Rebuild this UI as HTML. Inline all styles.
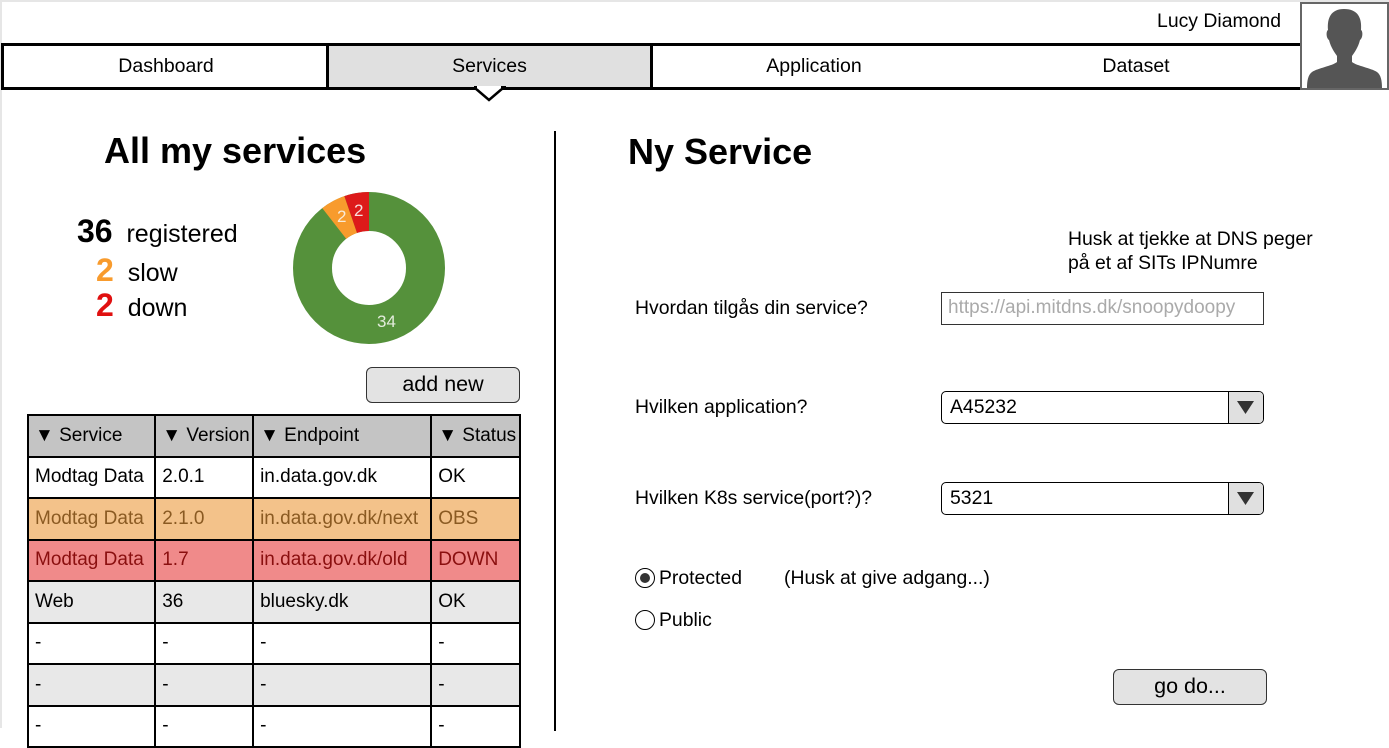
<!DOCTYPE html>
<html><head><meta charset="utf-8"><style>
*{box-sizing:border-box;margin:0;padding:0}
body{width:1389px;height:728px;overflow:hidden;background:#fff;font-family:"Liberation Sans",Arial,sans-serif;color:#000;position:relative}
.a{position:absolute}
.frame{left:0;top:0;width:1389px;height:728px;border-top:2px solid #e6e6e6;border-left:2px solid #e6e6e6}
.tab{top:43px;height:47px;border-top:3px solid #000;border-bottom:3px solid #000;font-size:19.5px;text-align:center;line-height:41px}
table{border-collapse:collapse;font-size:19px}
td{border:2px solid #000;height:41.5px;padding:0 0 0 6px;white-space:nowrap}
.btn{border:1.5px solid #333;border-radius:6px;background:#e3e3e3;text-align:center;font-size:21.5px}
.lbl{font-size:19.4px}
.sel{border:1.5px solid #000;border-radius:5px;height:33px;font-size:19.4px;line-height:30px;padding-left:8px}
.sel .arr{position:absolute;right:0;top:0;width:35px;height:100%;border-left:1.5px solid #000;background:#e0e0e0;border-radius:0 4px 4px 0}
.radio{width:20px;height:20px;border:1.5px solid #000;border-radius:50%}
</style></head><body>
<div class="a frame"></div>
<div class="a" style="left:1080px;top:10px;width:201px;text-align:right;font-size:19.4px">Lucy Diamond</div>
<div class="a tab" style="left:1px;width:327px;border-left:3px solid #000">Dashboard</div>
<div class="a tab" style="left:326px;width:327px;background:#e0e0e0;border-left:3px solid #000;border-right:3px solid #000">Services</div>
<div class="a tab" style="left:651px;width:652px"><span class="a" style="left:108px;width:110px">Application</span><span class="a" style="left:440px;width:90px">Dataset</span></div>
<svg class="a" style="left:474px;top:86px" width="32" height="16"><path d="M1 2 L15 14 L29 2" fill="#fff" stroke="#000" stroke-width="2.5"/><rect x="0" y="0" width="32" height="2.5" fill="#fff"/><path d="M0 1.5 H3 M27 1.5 H32" stroke="#000" stroke-width="3"/></svg>
<div class="a" style="left:1300px;top:2px;width:89px;height:88px;border:2px solid #666;background:#fff;overflow:hidden">
<svg width="85" height="84" viewBox="0 0 85 84"><path d="M42 5 C29 5 25 14 26 26 C24 27 24 34 27 36 C29 44 33 49 35 52 L35 58 C30 62 16 64 10 68 C6 71 5 77 5 84 H80 C80 77 79 71 75 68 C69 64 55 62 50 58 L50 52 C52 49 56 44 58 36 C61 34 61 27 59 26 C60 14 56 5 42 5Z" fill="#555"/></svg></div>

<div class="a" style="left:104px;top:130px;font-size:36px;font-weight:bold">All my services</div>
<div class="a" style="left:554px;top:131px;width:2px;height:600px;background:#000"></div>
<div class="a" style="left:628px;top:131px;font-size:36px;font-weight:bold">Ny Service</div>

<div class="a" style="left:77px;top:213px;font-size:25px;line-height:36px"><b style="font-size:32px">36</b>&nbsp; registered</div>
<div class="a" style="left:96px;top:252px;font-size:25px;line-height:36px"><b style="font-size:32px;color:#f89b2d">2</b>&nbsp; slow</div>
<div class="a" style="left:96px;top:287px;font-size:25px;line-height:36px"><b style="font-size:32px;color:#e01010">2</b>&nbsp; down</div>

<svg class="a" style="left:293px;top:192px" width="152" height="152" viewBox="0 0 152 152">
<g transform="translate(152 0) scale(-1 1) rotate(-90 76 76)">
<circle cx="76" cy="76" r="56.5" fill="none" stroke="#55913b" stroke-width="39"/>
<circle cx="76" cy="76" r="56.5" fill="none" stroke="#dd1a1a" stroke-width="39" stroke-dasharray="18.7 400"/>
<circle cx="76" cy="76" r="56.5" fill="none" stroke="#f89b2d" stroke-width="39" stroke-dasharray="0 18.7 18.7 400"/>
</g>
<text x="44" y="30" font-size="17" font-family="Liberation Sans" style="fill:#f8ead8">2</text>
<text x="61" y="24" font-size="17" font-family="Liberation Sans" style="fill:#f8dddd">2</text>
<text x="84" y="135" font-size="17" font-family="Liberation Sans" style="fill:#e3ecdc">34</text>
</svg>

<div class="a btn" style="left:366px;top:367px;width:154px;height:36px;line-height:32px">add new</div>

<table class="a" style="left:27px;top:414px;width:494px">
<colgroup><col style="width:128px"><col style="width:98px"><col style="width:179px"><col style="width:89px"></colgroup>
<tr style="background:#c4c4c4"><td>▼ Service</td><td>▼ Version</td><td>▼ Endpoint</td><td>▼ Status</td></tr>
<tr><td>Modtag Data</td><td>2.0.1</td><td>in.data.gov.dk</td><td>OK</td></tr>
<tr style="background:#f3c28a;color:#8a5a22"><td>Modtag Data</td><td>2.1.0</td><td>in.data.gov.dk/next</td><td>OBS</td></tr>
<tr style="background:#f08a8a;color:#8a0f0f"><td>Modtag Data</td><td>1.7</td><td>in.data.gov.dk/old</td><td>DOWN</td></tr>
<tr style="background:#e8e8e8"><td>Web</td><td>36</td><td>bluesky.dk</td><td>OK</td></tr>
<tr><td>-</td><td>-</td><td>-</td><td>-</td></tr>
<tr style="background:#e8e8e8"><td>-</td><td>-</td><td>-</td><td>-</td></tr>
<tr><td>-</td><td>-</td><td>-</td><td>-</td></tr>
</table>

<div class="a lbl" style="left:1068px;top:227px;line-height:24px">Husk at tjekke at DNS peger<br>på et af SITs IPNumre</div>
<div class="a lbl" style="left:635px;top:297px">Hvordan tilgås din service?</div>
<div class="a" style="left:941px;top:292px;width:323px;height:33px;border:1.5px solid #333;font-size:19px;color:#aaa;line-height:30px;padding-left:6px;white-space:nowrap;overflow:hidden">https://api.mitdns.dk/snoopydoopy</div>
<div class="a lbl" style="left:635px;top:396px">Hvilken application?</div>
<div class="a sel" style="left:941px;top:391px;width:323px">A45232<div class="arr"><svg width="33" height="30"><path d="M8 9 H25 L16.5 22Z" fill="#333"/></svg></div></div>
<div class="a lbl" style="left:635px;top:487px">Hvilken K8s service(port?)?</div>
<div class="a sel" style="left:941px;top:482px;width:323px">5321<div class="arr"><svg width="33" height="30"><path d="M8 9 H25 L16.5 22Z" fill="#333"/></svg></div></div>

<div class="a radio" style="left:635px;top:568px"><div style="width:10px;height:10px;background:#333;border-radius:50%;margin:3.5px"></div></div>
<div class="a lbl" style="left:659px;top:567px">Protected</div>
<div class="a lbl" style="left:784px;top:567px">(Husk at give adgang...)</div>
<div class="a radio" style="left:635px;top:610px"></div>
<div class="a lbl" style="left:659px;top:609px">Public</div>
<div class="a btn" style="left:1113px;top:669px;width:154px;height:36px;line-height:33px">go do...</div>
</body></html>
